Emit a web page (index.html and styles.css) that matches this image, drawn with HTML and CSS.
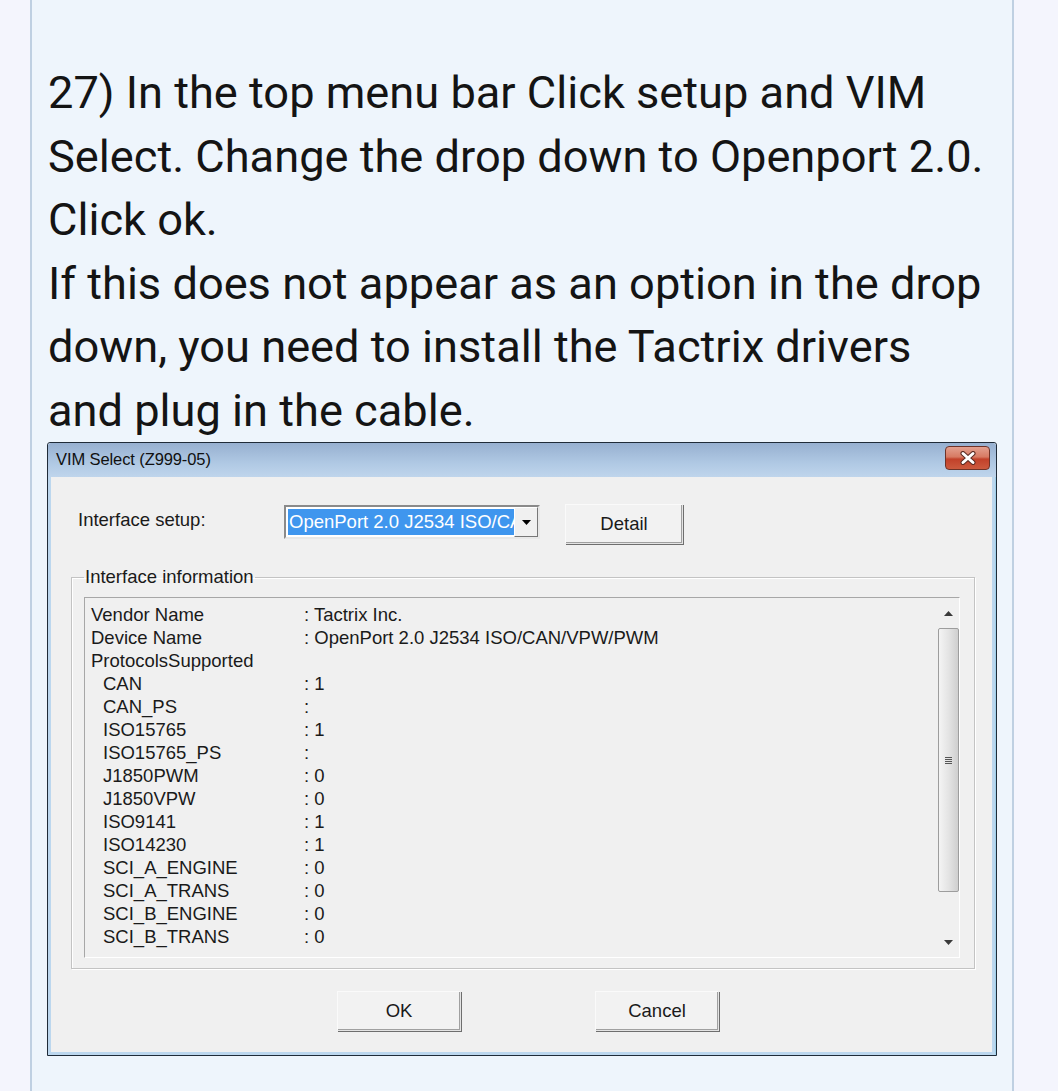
FILE: index.html
```html
<!DOCTYPE html>
<html>
<head>
<meta charset="utf-8">
<link rel="stylesheet" href="styles.css">
</head>
<body>
<div class="page">
  <div class="side side-left"></div>
  <main class="column">
    <p class="step">27) In the top menu bar Click setup and VIM Select. Change the drop down to Openport 2.0. Click ok.<br>If this does not appear as an option in the drop down, you need to install the Tactrix drivers and plug in the cable.</p>
    <div class="dialog">
      <div class="titlebar">
        <span class="title">VIM Select (Z999-05)</span>
        <span class="close">
          <svg width="20" height="14" viewBox="0 0 20 14"><path d="M5 2.5 L15 11.5 M15 2.5 L5 11.5" stroke="#5a2a22" stroke-width="5" stroke-linecap="round"/><path d="M5 2.5 L15 11.5 M15 2.5 L5 11.5" stroke="#fff" stroke-width="3" stroke-linecap="round"/></svg>
        </span>
      </div>
      <div class="frame">
        <div class="body">
          <div class="setup-row">
            <span class="setup-label">Interface setup:</span>
            <div class="combo">
              <span class="combo-text"><span class="sel">OpenPort 2.0 J2534 ISO/CAN</span></span>
              <span class="combo-btn"><svg width="9" height="5" viewBox="0 0 9 5"><path d="M0 0 H9 L4.5 5 Z" fill="#000"/></svg></span>
            </div>
            <button class="btn btn-detail">Detail</button>
          </div>
          <fieldset class="group">
            <legend>Interface information</legend>
            <div class="listbox">
              <div class="rows">
                <div class="row"><span class="k">Vendor Name</span><span class="v">: Tactrix Inc.</span></div>
                <div class="row"><span class="k">Device Name</span><span class="v">: OpenPort 2.0 J2534 ISO/CAN/VPW/PWM</span></div>
                <div class="row"><span class="k">ProtocolsSupported</span><span class="v"></span></div>
                <div class="row"><span class="k sub">CAN</span><span class="v">: 1</span></div>
                <div class="row"><span class="k sub">CAN_PS</span><span class="v">:</span></div>
                <div class="row"><span class="k sub">ISO15765</span><span class="v">: 1</span></div>
                <div class="row"><span class="k sub">ISO15765_PS</span><span class="v">:</span></div>
                <div class="row"><span class="k sub">J1850PWM</span><span class="v">: 0</span></div>
                <div class="row"><span class="k sub">J1850VPW</span><span class="v">: 0</span></div>
                <div class="row"><span class="k sub">ISO9141</span><span class="v">: 1</span></div>
                <div class="row"><span class="k sub">ISO14230</span><span class="v">: 1</span></div>
                <div class="row"><span class="k sub">SCI_A_ENGINE</span><span class="v">: 0</span></div>
                <div class="row"><span class="k sub">SCI_A_TRANS</span><span class="v">: 0</span></div>
                <div class="row"><span class="k sub">SCI_B_ENGINE</span><span class="v">: 0</span></div>
                <div class="row"><span class="k sub">SCI_B_TRANS</span><span class="v">: 0</span></div>
              </div>
              <div class="scrollbar">
                <span class="arrow"><svg width="9" height="5" viewBox="0 0 9 5"><path d="M0 5 H9 L4.5 0 Z" fill="#3a3a3a"/></svg></span>
                <div class="thumb"><span class="grip"></span></div>
                <div class="track"></div>
                <span class="arrow"><svg width="9" height="5" viewBox="0 0 9 5"><path d="M0 0 H9 L4.5 5 Z" fill="#3a3a3a"/></svg></span>
              </div>
            </div>
          </fieldset>
          <div class="actions">
            <button class="btn btn-ok">OK</button>
            <button class="btn btn-cancel">Cancel</button>
          </div>
        </div>
      </div>
    </div>
  </main>
  <div class="side side-right"></div>
</div>
</body>
</html>
```

FILE: styles.css
```css
html, body {
  margin: 0;
  padding: 0;
}
body {
  background: #f4f5fd;
  font-family: Roboto, "Liberation Sans", sans-serif;
}
.page {
  display: flex;
  min-height: 1091px;
}
.side {
  background: #f4f5fd;
}
.side-left {
  width: 30px;
  border-right: 2px solid #bfd0e2;
}
.side-right {
  flex: 1;
  border-left: 2px solid #bfd0e2;
}
.column {
  width: 980px;
  background: #eef5fc;
  padding: 61px 0 0 0;
}
.step {
  margin: 0 22px 0 16px;
  font-size: 45.2px;
  line-height: 63.5px;
  color: #141414;
  font-weight: 400;
}
.dialog {
  margin-left: 15px;
  width: 950px;
  box-sizing: border-box;
  border: 1px solid #1f2b38;
  border-radius: 3px 3px 0 0;
  font-family: "Liberation Sans", Arial, sans-serif;
}
.titlebar {
  height: 34px;
  background: linear-gradient(#97b0d0, #b0c9e4 60%, #bfd5ec);
  display: flex;
  align-items: center;
  justify-content: space-between;
  padding: 0 6px 0 8px;
  border-radius: 3px 3px 0 0;
}
.title {
  font-size: 16.5px;
  color: #101010;
  letter-spacing: -0.1px;
  margin-top: -1px;
}
.close {
  width: 43px;
  height: 22px;
  border: 1px solid #6e3328;
  border-radius: 4px;
  background: linear-gradient(#e3a08f, #d77a63 45%, #c2412a 55%, #cc5a3e);
  display: flex;
  align-items: center;
  justify-content: center;
  margin-top: -4px;
}
.frame {
  background: #bcd7ee;
  padding: 0 3px 3px 3px;
  border-right: 1px solid #9fd0ea;
}
.body {
  background: #f0f0f0;
  padding: 27px 0 21px 0;
}
.setup-row {
  display: flex;
  align-items: flex-start;
  padding-left: 27px;
  height: 40px;
}
.setup-label {
  width: 206px;
  font-size: 18.5px;
  color: #1a1a1a;
  margin-top: 5px;
}
.combo {
  width: 256px;
  height: 34px;
  box-sizing: border-box;
  margin-top: 1px;
  border: 2px solid #8a8a8a;
  border-right-color: #e8e8e8;
  border-bottom-color: #e8e8e8;
  background: #fff;
  display: flex;
  padding: 2px 0 2px 2px;
}
.combo-text {
  flex: 1;
  overflow: hidden;
  white-space: nowrap;
  background: #3f96ee;
}
.sel {
  color: #fff;
  font-size: 18.5px;
  line-height: 26px;
  padding-left: 1px;
}
.combo-btn {
  width: 22px;
  background: #f0f0f0;
  border: 1px solid #fff;
  border-right-color: #777;
  border-bottom-color: #777;
  display: flex;
  align-items: center;
  justify-content: center;
  margin-top: -2px;
  margin-bottom: -2px;
}
.btn {
  font-family: "Liberation Sans", Arial, sans-serif;
  font-size: 18.5px;
  color: #1a1a1a;
  background: #f2f2f2;
  border: 1px solid #e4e4e4;
  border-top-color: #fafafa;
  border-left-color: #fafafa;
  box-shadow: inset -1px -1px 0 #a0a0a0, 1px 1px 0 #6e6e6e;
  height: 40px;
  padding: 0;
}
.btn-detail {
  width: 118px;
  margin-left: 25px;
}
.group {
  margin: 22px 0 0 20px;
  width: 904px;
  box-sizing: border-box;
  border: 1px solid #c3c3c3;
  box-shadow: inset 1px 1px 0 #fff, 1px 1px 0 #fff;
  padding: 9px 14px 10px 12px;
  min-width: 0;
}
.group legend {
  font-size: 18.5px;
  color: #1a1a1a;
  padding: 0 1px;
  margin-left: 0;
}
.listbox {
  height: 361px;
  box-sizing: border-box;
  border: 1px solid #fff;
  border-top-color: #a7a7a7;
  border-left-color: #a7a7a7;
  display: flex;
  background: #f0f0f0;
}
.rows {
  flex: 1;
  padding: 5px 0 0 6px;
}
.row {
  display: flex;
  height: 23px;
  line-height: 23px;
  font-size: 18.5px;
  color: #1a1a1a;
}
.k {
  width: 213px;
  box-sizing: border-box;
  white-space: nowrap;
}
.k.sub {
  padding-left: 12px;
}
.v {
  white-space: nowrap;
}
.scrollbar {
  width: 21px;
  display: flex;
  flex-direction: column;
  background: #f0f0f0;
}
.arrow {
  height: 30px;
  display: flex;
  align-items: center;
  justify-content: center;
}
.thumb {
  height: 264px;
  box-sizing: border-box;
  border: 1px solid #9d9d9d;
  border-radius: 2px;
  background: linear-gradient(90deg, #f4f4f4, #e4e4e4 50%, #cfcfcf);
  display: flex;
  align-items: center;
  justify-content: center;
}
.grip {
  width: 7px;
  height: 7px;
  background: repeating-linear-gradient(#555 0 1px, transparent 1px 2px);
}
.track {
  flex: 1;
}
.actions {
  display: flex;
  margin-top: 22px;
  padding-left: 286px;
}
.btn-ok {
  width: 124px;
}
.btn-cancel {
  width: 124px;
  margin-left: 134px;
}
```
